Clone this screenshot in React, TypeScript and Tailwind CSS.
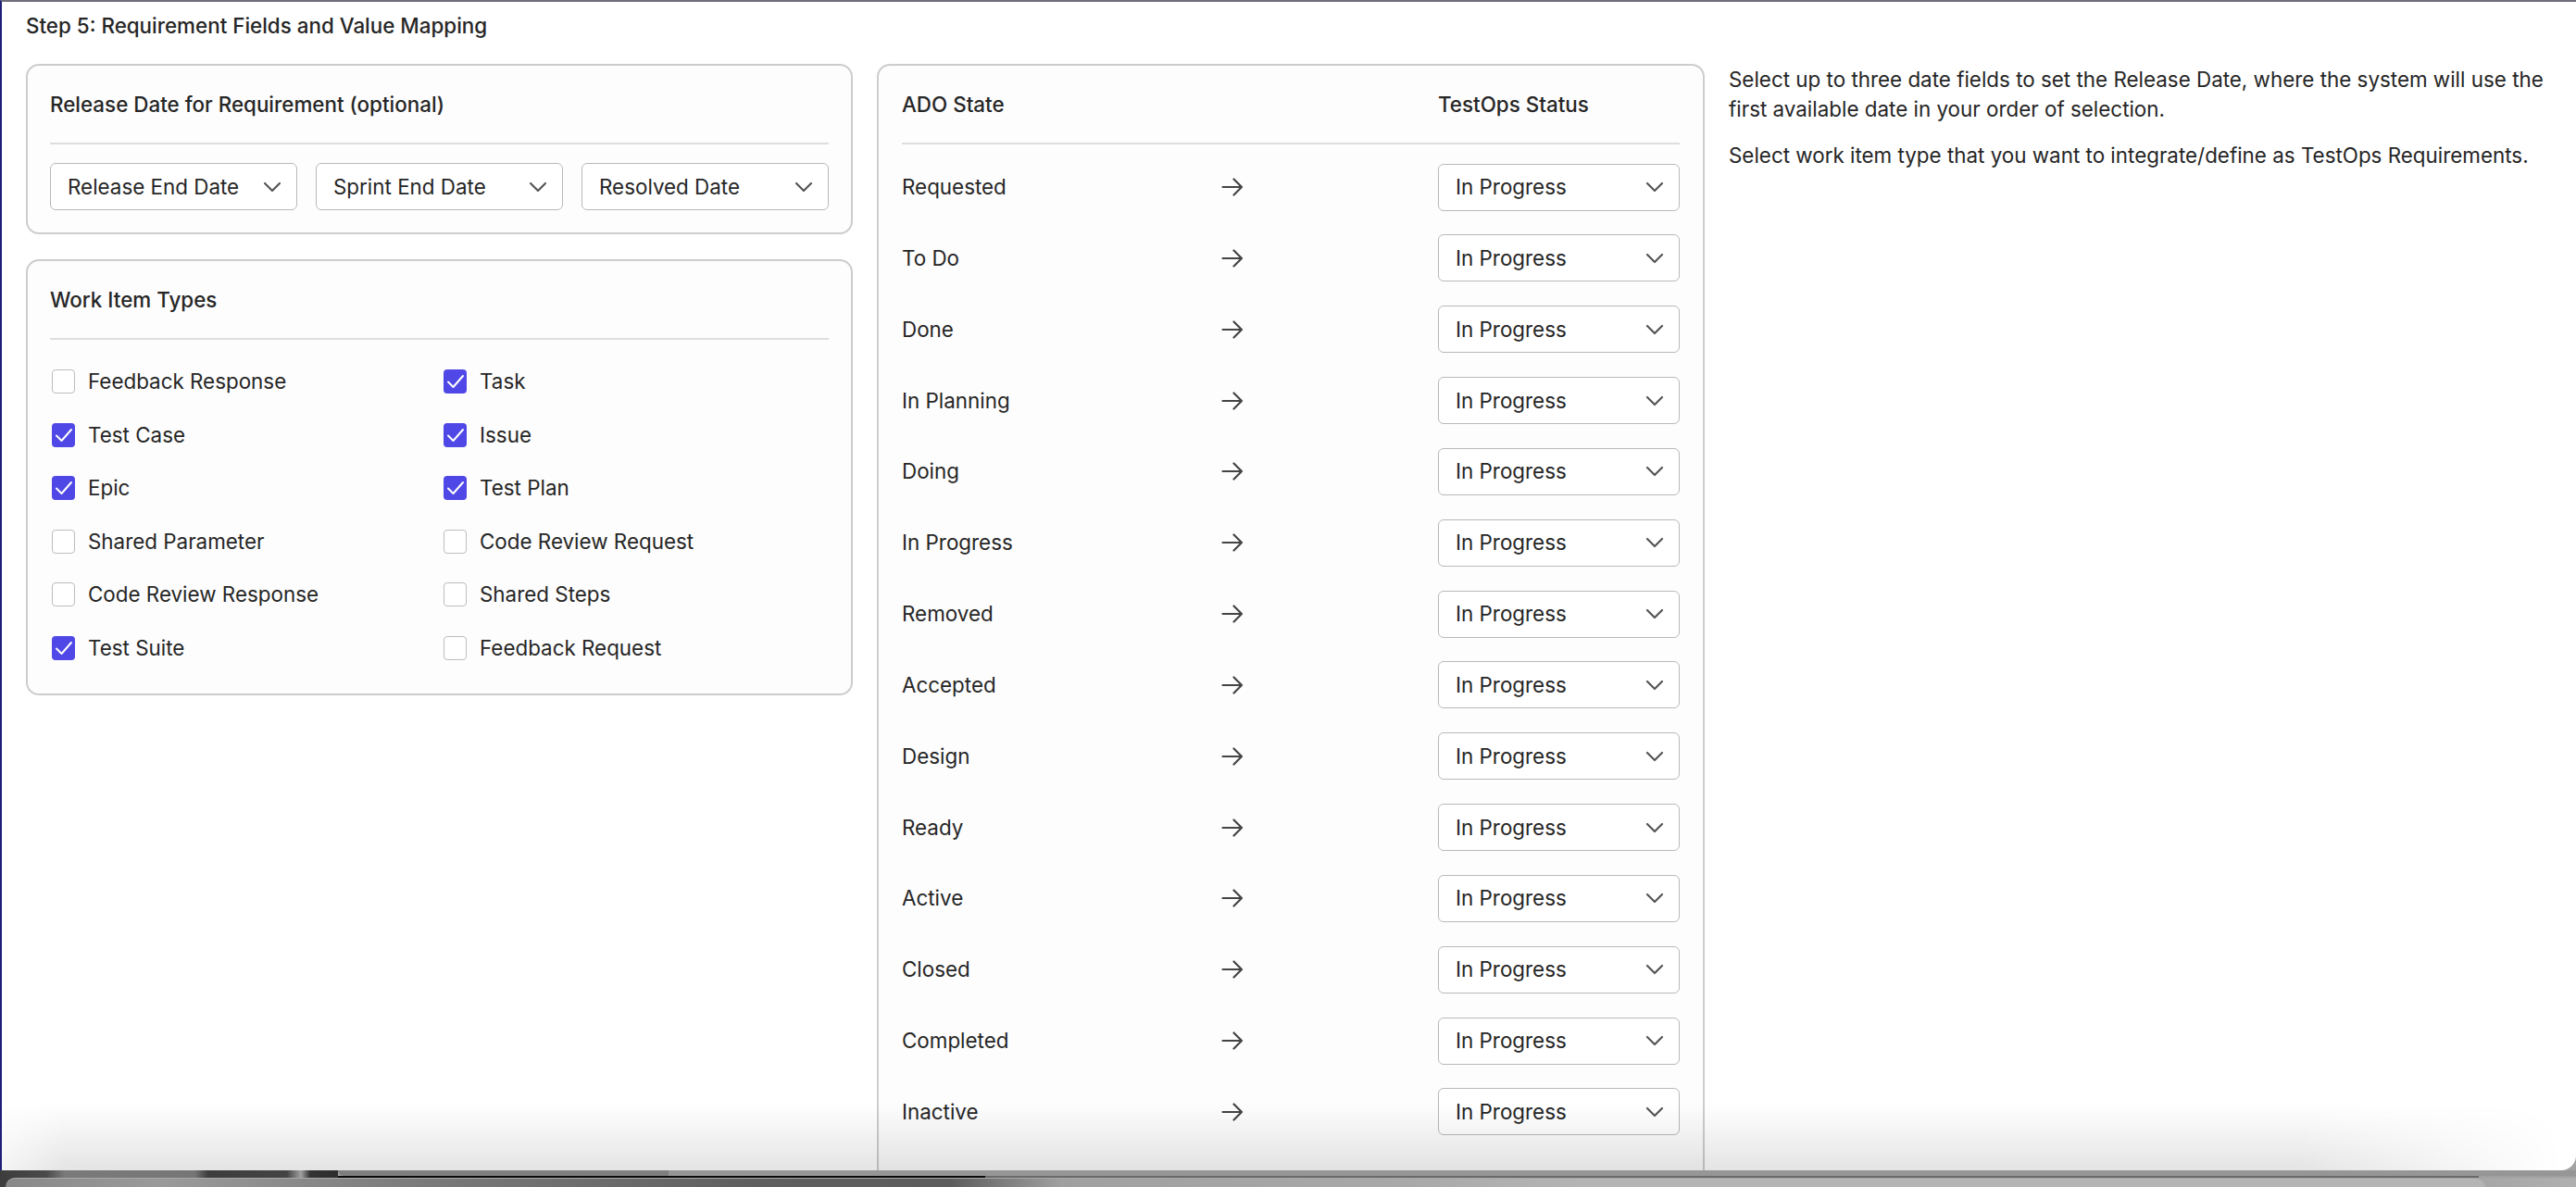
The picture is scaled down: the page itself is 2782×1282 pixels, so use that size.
import { ChevronDown } from "lucide-react";

const selectCls =
  "flex h-[51px] items-center justify-between rounded-[6px] border border-[#b9b9b9] bg-white pl-[18px] pr-[16px] text-[22.4px] leading-[32px] text-[#262626]";

function Select({ label, className = "" }: { label: string; className?: string }) {
  return (
    <div className={`${selectCls} ${className}`}>
      <span>{label}</span>
      <ChevronDown size={32} strokeWidth={1.6} className="mr-[-6px] text-[#555555]" />
    </div>
  );
}

function Arrow() {
  return (
    <svg width="24" height="20" viewBox="0 0 24 20" fill="none" stroke="#444444" strokeWidth="2.2" strokeLinecap="round" strokeLinejoin="round">
      <path d="M1.5 10H22M13.5 1.5L22 10L13.5 18.5" />
    </svg>
  );
}

function Checkbox({ label, checked }: { label: string; checked?: boolean }) {
  return (
    <div className="flex h-[32px] items-center">
      {checked ? (
        <div className="ml-[2px] flex h-[26px] w-[25px] items-center justify-center rounded-[4px] bg-[#4f48e6]">
          <svg width="20" height="18" viewBox="0 0 20 18" fill="none" stroke="#ffffff" strokeWidth="2" strokeLinecap="round" strokeLinejoin="round">
            <path d="M2 9.5L7.5 15L18 3" />
          </svg>
        </div>
      ) : (
        <div className="ml-[2px] h-[26px] w-[25px] rounded-[4px] border border-[#bdbdbd] bg-white" />
      )}
      <span className="ml-[14px] text-[22.4px] leading-[32px] text-[#262626]">{label}</span>
    </div>
  );
}

const types: [string, boolean][] = [
  ["Feedback Response", false],
  ["Task", true],
  ["Test Case", true],
  ["Issue", true],
  ["Epic", true],
  ["Test Plan", true],
  ["Shared Parameter", false],
  ["Code Review Request", false],
  ["Code Review Response", false],
  ["Shared Steps", false],
  ["Test Suite", true],
  ["Feedback Request", false],
];

const states = [
  "Requested",
  "To Do",
  "Done",
  "In Planning",
  "Doing",
  "In Progress",
  "Removed",
  "Accepted",
  "Design",
  "Ready",
  "Active",
  "Closed",
  "Completed",
  "Inactive",
];

export default function App() {
  return (
    <div
      className="flex h-[1282px] w-[2782px] flex-col overflow-hidden bg-[#a3a3a3]"
      style={{ fontFamily: "Inter, 'Noto Sans', sans-serif" }}
    >
      <div className="relative h-[1264px] shrink-0 overflow-hidden rounded-br-[16px] border-t-2 border-l-2 border-t-[#6e6e7c] border-l-[#1f1f7a] bg-white pl-[26px]">
        <h1 className="flex h-[51px] items-center text-[22.4px] font-medium text-[#262626]">
          Step 5: Requirement Fields and Value Mapping
        </h1>
        <div className="mt-[16px] grid grid-cols-[893px_894px_1fr] gap-x-[26px]">
          <div className="flex flex-col gap-[27px]">
            <section className="rounded-[14px] border-2 border-[#cdcdcd] bg-[#fdfdfd] px-[24px] pt-[26px] pb-[24px]">
              <h2 className="border-b-2 border-[#dedede] pb-[25px] text-[22.4px] leading-[32px] font-medium text-[#262626]">
                Release Date for Requirement (optional)
              </h2>
              <div className="mt-[20px] flex gap-[20px]">
                <Select label="Release End Date" className="flex-1" />
                <Select label="Sprint End Date" className="flex-1" />
                <Select label="Resolved Date" className="flex-1" />
              </div>
            </section>
            <section className="rounded-[14px] border-2 border-[#cdcdcd] bg-[#fdfdfd] px-[24px] pt-[26px] pb-[33px]">
              <h2 className="border-b-2 border-[#dedede] pb-[25px] text-[22.4px] leading-[32px] font-medium text-[#262626]">
                Work Item Types
              </h2>
              <div className="mt-[29px] grid grid-cols-[423px_1fr] gap-y-[25.6px]">
                {types.map(([label, checked]) => (
                  <Checkbox key={label} label={label} checked={checked} />
                ))}
              </div>
            </section>
          </div>
          <section className="h-[1300px] rounded-[14px] border-2 border-[#cdcdcd] bg-[#fdfdfd] px-[25px] pt-[26px]">
            <div className="grid grid-cols-[579px_1fr] border-b-2 border-[#dedede] pb-[25px] text-[22.4px] leading-[32px] font-medium text-[#262626]">
              <span>ADO State</span>
              <span>TestOps Status</span>
            </div>
            <div className="mt-[20.5px] flex flex-col gap-[25.85px]">
              {states.map((s) => (
                <div key={s} className="grid grid-cols-[320px_74px_1fr] items-center">
                  <span className="text-[22.4px] leading-[32px] text-[#262626]">{s}</span>
                  <span className="flex justify-center">
                    <Arrow />
                  </span>
                  <Select label="In Progress" className="w-[261px] justify-self-end" />
                </div>
              ))}
            </div>
          </section>
          <div className="text-[22.4px] leading-[32px] text-[#262626]">
            <p className="mt-[1px] w-[894px]">
              Select up to three date fields to set the Release Date, where the system will use the first available date
              in your order of selection.
            </p>
            <p className="mt-[18px]">Select work item type that you want to integrate/define as TestOps Requirements.</p>
          </div>
        </div>
        <div className="pointer-events-none absolute right-0 bottom-0 left-0 h-[72px] bg-gradient-to-t from-[#0000001b] to-transparent [mask-image:linear-gradient(to_right,#0006_0,#000_70px,#000_2480px,transparent_2765px)]" />
      </div>
      <div className="h-[18px] shrink-0 bg-[#a3a3a3]">
        <div className="flex h-[8px]">
          <div className="h-full w-[365px] shrink-0 bg-[linear-gradient(to_right,#3d3d3d_0,#4a4a4a_50px,#7a7a7a_70px,#767676_210px,#3c3c3c_225px,#444444_310px,#a0a0a0_325px,#333333_335px,#2c2c2c_365px)]" />
          <div className="flex min-w-0 flex-1 flex-col">
            <div className="flex h-[6px]">
              <div className="w-[357px] rounded-bl-[10px] bg-[#7f7f7f]" />
              <div className="flex-1 bg-[#969696]" />
            </div>
            <div className="flex h-[2px]">
              <div className="w-[699px] bg-[#0a0a0a]" />
              <div className="w-[1613px] bg-[#6a6a6a]" />
              <div className="flex-1 bg-[#a0a0a0]" />
            </div>
          </div>
        </div>
        <div className="h-[10px] bg-[linear-gradient(to_right,#3d3d3d_0,#555555_300px,#333333_1000px,#777777_2200px,#b0b0b0_2782px)]">
          <div className="ml-[6px] h-full w-[2678px] rounded-t-[14px] border-t border-[#a8a8a8] bg-[linear-gradient(to_right,#888888_0,#9a9a9a_170px,#7a7a7a_450px,#5f5f5f_800px,#5c5c5c_1020px,#a0a0a0_1140px,#a8a8a8_1500px,#b4b4b4_1700px,#b4b4b4_100%)]" />
        </div>
      </div>
    </div>
  );
}
